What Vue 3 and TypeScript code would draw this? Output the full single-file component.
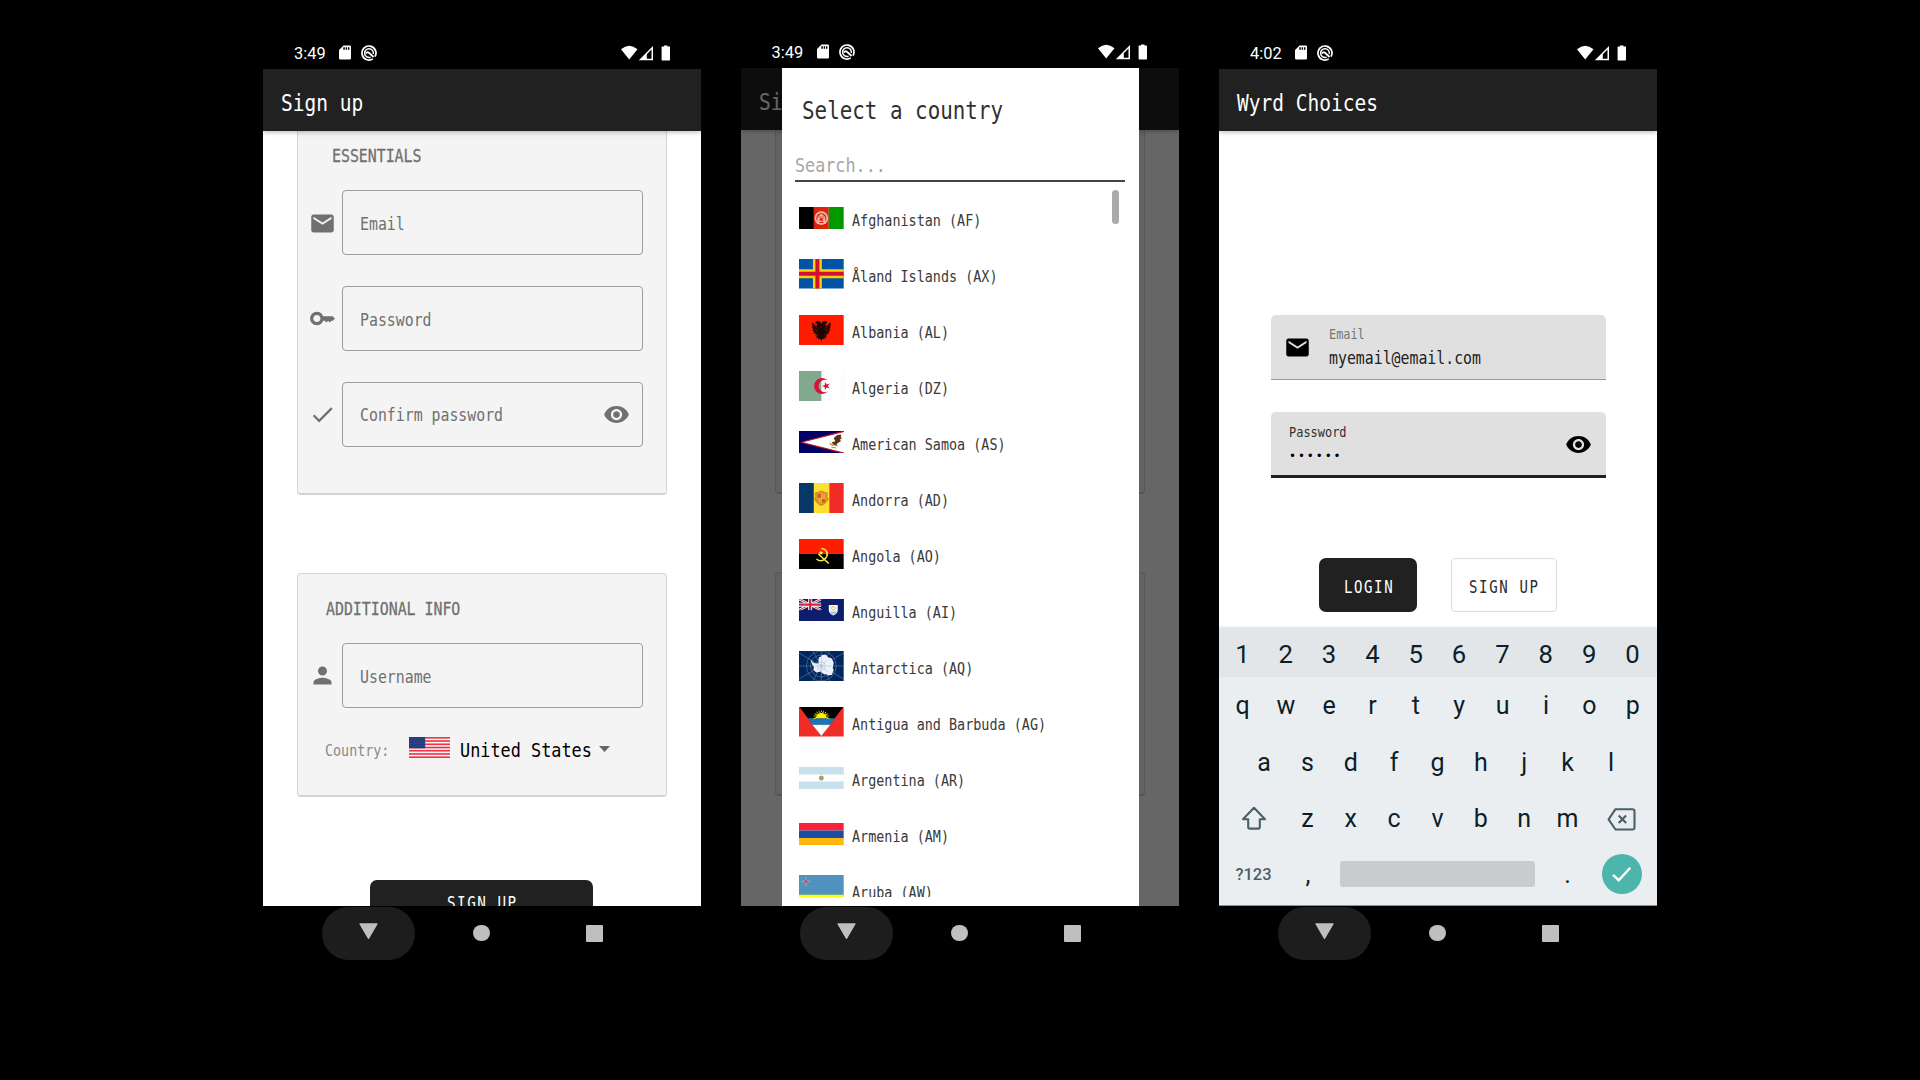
<script setup lang="ts">
import { h } from 'vue'
import type { FunctionalComponent } from 'vue'

interface MonoProps {
  text: string
  cap: number
  adv: number
  sx?: number
  bold?: number
}

// Condensed monospace label: the box is exactly cap-height tall, glyphs sit on its bottom edge.
const Mono: FunctionalComponent<MonoProps> = (p) => {
  const size = p.cap / 0.729
  const sx = p.sx ?? p.adv / (size * 0.602)
  const spacing = p.adv / sx - size * 0.602
  return h(
    'svg',
    { class: 'mono', width: p.text.length * p.adv, height: p.cap },
    h(
      'text',
      {
        transform: `translate(0 ${p.cap}) scale(${sx} 1)`,
        'font-size': size,
        'letter-spacing': spacing,
        fill: 'currentColor',
        stroke: 'currentColor',
        'stroke-width': p.bold ?? 0,
        'xml:space': 'preserve',
      },
      p.text,
    ),
  )
}
Mono.props = ['text', 'cap', 'adv', 'sx', 'bold']

const icons: Record<string, string> = {
  mail: 'M20 4H4c-1.1 0-1.99.9-1.99 2L2 18c0 1.1.9 2 2 2h16c1.1 0 2-.9 2-2V6c0-1.1-.9-2-2-2zm0 4l-8 5-8-5V6l8 5 8-5v2z',
  key: 'M12.65 10C11.83 7.67 9.61 6 7 6c-3.31 0-6 2.69-6 6s2.69 6 6 6c2.61 0 4.83-1.67 5.65-4H14l1.5 1.5L17 14l1.5 1.5L20 14h1.2L23 12l-2-2zM7 15.2c-1.77 0-3.2-1.43-3.2-3.2S5.230 8.8 7 8.800s3.200 1.430 3.200 3.200-1.430 3.200-3.200 3.200z',
  check: 'M9 16.170L4.830 12l-1.420 1.410L9 19 21 7l-1.410-1.410z',
  eye: 'M12 4.5C7 4.500 2.730 7.610 1 12c1.730 4.390 6 7.500 11 7.500s9.270-3.110 11-7.500c-1.730-4.390-6-7.500-11-7.500zM12 17c-2.760 0-5-2.240-5-5s2.240-5 5-5 5 2.240 5 5-2.240 5-5 5zm0-8c-1.660 0-3 1.340-3 3s1.340 3 3 3 3-1.340 3-3-1.340-3-3-3z',
  person: 'M12 12c2.210 0 4-1.790 4-4s-1.790-4-4-4-4 1.790-4 4 1.790 4 4 4zm0 2c-2.670 0-8 1.340-8 4v2h16v-2c0-2.660-5.330-4-8-4z',
}

const fields = [
  { icon: 'mail', label: 'Email' },
  { icon: 'key', label: 'Password' },
  { icon: 'check', label: 'Confirm password' },
]

const phones = [
  { id: 'signup', time: '3:49' },
  { id: 'country', time: '3:49' },
  { id: 'login', time: '4:02' },
]

const stripes = [0, 2, 4, 6, 8, 10, 12].map((y) => `<rect y="${y}" width="41" height="1" fill="#ee3344"/>`).join('')
const stars = [1, 2.5, 4, 5.5]
  .map((y, r) => [1, 3, 5, 7, 9, 11, 13, 15].map((x) => `<circle cx="${x + (r % 2) * 0.8}" cy="${y}" r=".25" fill="#8f9acb"/>`).join(''))
  .join('')
const usFlag = `<rect width="41" height="13" fill="#fdf3f4"/>${stripes}<rect width="16" height="7" fill="#233a7c"/>${stars}`

const spokes = Array.from({ length: 12 }, (_, i) => {
  const a = (i * Math.PI) / 6
  return `M45 30L${45 + Math.cos(a) * 55} ${30 + Math.sin(a) * 55}`
}).join('')
const rays = Array.from({ length: 11 }, (_, i) => {
  const a = (i * Math.PI) / 10
  const p = (r: number, t: number) => `${45 + Math.cos(t) * r} ${23 - Math.sin(t) * r}`
  return `M${p(11, a - 0.14)}L${p(18, a)}L${p(11, a + 0.14)}Z`
}).join('')

interface Country {
  name: string
  fh: number
  art: string
}

const countries: Country[] = [
  {
    name: 'Afghanistan (AF)',
    fh: 22,
    art: '<path fill="#000" d="M0 0h30v44H0z"/><path fill="#d9230f" d="M30 0h30v44H30z"/><path fill="#090" d="M60 0h30v44H60z"/><circle cx="45" cy="22" r="12" fill="none" stroke="#f3b8ae" stroke-width="3.500"/><path d="M37 30v-10l8-7 8 7v10z" fill="#f0aba0"/><path d="M42.500 27v-4h5v4zM39 20h12" fill="#d9230f" stroke="#d9230f" stroke-width="1.300"/><path d="M36 33h18" stroke="#f3b8ae" stroke-width="2"/>',
  },
  {
    name: 'Åland Islands (AX)',
    fh: 29.5,
    art: '<path fill="#0053a5" d="M0 0h90v60H0z"/><path fill="#ffce00" d="M28 0h18v60H28zM0 21h90v18H0z"/><path fill="#d21034" d="M33 0h8v60h-8zM0 26h90v8H0z"/>',
  },
  {
    name: 'Albania (AL)',
    fh: 30.5,
    art: '<path fill="#ff1d00" d="M0 0h90v60H0z"/><path fill="#1c0603" d="M45 17l-3-4-6-1-4 4 5 1-1 4-4-1-5-6-1 7 2 2-2 2 3 3-2 3 4 2-2 4 5-1-1 5 4-2-3 6 5-1-1 4 4-2 3 5 3-5 4 2-1-4 5 1-3-6 4 2-1-5 5 1-2-4 4-2-2-3 3-3-2-2 2-2-1-7-5 6-4 1-1-4 5-1-4-4-6 1z"/><path stroke="#ff1d00" stroke-width=".8" d="M32 22l7 5M31 28l7 3M58 22l-7 5M59 28l-7 3M36 35l3 4M54 35l-3 4"/>',
  },
  {
    name: 'Algeria (DZ)',
    fh: 30,
    art: '<path fill="#fefefe" d="M0 0h90v60H0z"/><path fill="#82a98f" d="M0 0h45v60H0z"/><path fill="#f3f3f3" d="M89 0h1v60h-1z"/><path fill="#d8123a" d="M58 19a16 16 0 1 0 0 22 12.500 12.500 0 1 1 0-22zM46 30l6-2v-6l4 5 6-2-4 5 4 5-6-2-4 5v-6z"/>',
  },
  {
    name: 'American Samoa (AS)',
    fh: 22.500,
    art: '<path fill="#006" d="M0 0h90v45H0z"/><path fill="#fff" stroke="#bd1021" stroke-width="2.500" d="M93 0L4 22.500 93 45z"/><path fill="#583016" d="M70 14l7-6 8-1-1 6 4 1-5 2 1 5-6 3-4 6-5-3-3-5 7-1z"/><path fill="none" stroke="#b79032" stroke-width="2" d="M62 26l17 4M65 32l10 2M62 23l6 7"/>',
  },
  {
    name: 'Andorra (AD)',
    fh: 30,
    art: '<path fill="#073768" d="M0 0h30v60H0z"/><path fill="#fedf31" d="M30 0h31v60H30z"/><path fill="#ef2d26" d="M61 0h29v60H61z"/><path fill="#e0922a" stroke="#c77b25" stroke-width="1.500" d="M33 20l7-2 5-2 5 2 7 2-1 8 3 4-4 6-5 5-5 2-5-2-5-5-4-6 3-4z"/><path fill="#d3562b" d="M38 22h6v8h-6zM46 32h6v7h-6z"/><path stroke="#f3c447" stroke-width="1.200" d="M45 21v20M37 31h16M48 22v8M51 22v8M39 34h5M39 37h5"/>',
  },
  {
    name: 'Angola (AO)',
    fh: 30,
    art: '<path fill="#ff1d00" d="M0 0h90v30H0z"/><path d="M0 30h90v30H0z"/><path fill="none" stroke="#ffec3d" stroke-width="3.200" d="M45 19c12 1 15 13 8 20-6 6-13 5-18 1M39 30l21 19"/><path fill="#ffec3d" d="M44 23l1.500 3 3.500.5-2.500 2 .8 3.500-3.300-2-3 2 .8-3.500-2.300-2 3-.5z"/>',
  },
  {
    name: 'Anguilla (AI)',
    fh: 22.500,
    art: '<path fill="#0b1d6b" d="M0 0h90v45H0z"/><path stroke="#fff" stroke-width="5" d="M0 0l45 22.500M45 0L0 22.500"/><path stroke="#d8344d" stroke-width="2" d="M0 0l45 22.500M45 0L0 22.500"/><path stroke="#fff" stroke-width="8" d="M22.500 0v22.500M0 11.250h45"/><path stroke="#cf2440" stroke-width="4.500" d="M22.500 0v22.500M0 11.250h45"/><path fill="#0b1d6b" d="M0 22.500h90V45H0zM45 0h45v25H45z"/><path fill="#f6f8f3" d="M60 12h18v11c0 5-5 8-9 10-4-2-9-5-9-10z"/><path fill="#8ed2e4" d="M62 25h14c-1 3-4 5-7 6.500-3-1.500-6-3.500-7-6.500z"/><circle cx="69" cy="18.500" r="3.500" fill="none" stroke="#ecb45c" stroke-width="2"/>',
  },
  {
    name: 'Antarctica (AQ)',
    fh: 30,
    art: `<path fill="#00265d" d="M0 0h90v60H0z"/><g fill="none" stroke="#6f87a8" stroke-width="1.100"><path d="${spokes}"/><circle cx="45" cy="30" r="30"/><circle cx="45" cy="30" r="22"/></g><path fill="#eef2f8" d="M23 17l7 7 7 1 3-2-1-6 2-5 4-1 1-3 8-1 5 6 6 1 5 9-2 11 2 4-4 10-8 1-3-3-4 1-4-3-3-3-9 2-6-5 1-7-3-3z"/><g fill="none" stroke="#9fb0ca" stroke-width=".9"><circle cx="45" cy="30" r="8"/><circle cx="45" cy="30" r="3"/><path d="M45 12v36M30 30h36M34 20l24 22M57 18L34 40"/></g>`,
  },
  {
    name: 'Antigua and Barbuda (AG)',
    fh: 29.500,
    art: `<path fill="#ef2d26" d="M0 0h90v60H0z"/><path d="M1 0h88L45 59z"/><path fill="#1b75bb" d="M18 23h54L63 36H27z"/><path fill="#fff" d="M27 36h36L45 59z"/><path fill="#fff200" d="M32 23a13 13 0 0 1 26 0z${rays}"/>`,
  },
  {
    name: 'Argentina (AR)',
    fh: 22,
    art: '<path fill="#c8dfec" d="M0 0h90v44H0z"/><path fill="#fff" d="M0 15h90v14H0z"/><circle cx="45" cy="22" r="5" fill="#ac9c6c"/>',
  },
  {
    name: 'Armenia (AM)',
    fh: 22,
    art: '<path fill="#fb2038" d="M0 0h90v15H0z"/><path fill="#1c4ea3" d="M0 15h90v15H0z"/><path fill="#ffb60d" d="M0 30h90v14H0z"/>',
  },
  {
    name: 'Aruba (AW)',
    fh: 30,
    art: '<path fill="#5292be" d="M0 0h90v60H0z"/><path fill="#ff0" d="M0 39.500h90v5H0zM0 49h90v4H0z"/><path fill="#ff2c27" stroke="#e9c5cf" stroke-width=".7" d="M14 4l1.700 7.300 7.300 1.700-7.300 1.700L14 22l-1.700-7.300L5 13l7.300-1.700z"/>',
  },
]

const viewHeight = (c: Country) => (c.fh > 25 ? 60 : c.name.includes('(AS)') || c.name.includes('(AI)') ? 45 : 44)

const digits = [...'1234567890']
const rowQ = [...'qwertyuiop']
const rowA = [...'asdfghjkl']
const rowZ = [...'zxcvbnm']
</script>

<template>
  <div class="stage">
    <section v-for="p in phones" :key="p.id" class="phone" :class="p.id">
      <div class="status">
        <span class="time">{{ p.time }}</span>
        <svg class="sd" width="12" height="15" viewBox="0 0 12 15">
          <path fill="#fff" fill-rule="evenodd" d="M4.500 .5H10.700q1.300 0 1.300 1.300V13.200q0 1.300-1.300 1.300H1.300Q0 14.500 0 13.200V5zM4.300 2.200v2.600h1.500V2.200zM6.700 2.200v2.600h1.400V2.200zM9 2.200v2.600h1.400V2.200z" />
        </svg>
        <svg class="swirl" width="16" height="16" viewBox="0 0 16 16" fill="none" stroke="#fff">
          <path stroke-width="1.700" d="M11.800 13.900A7 7 0 1 1 14 11.600" />
          <path stroke-width="1.500" d="M9.600 12.200A4.400 4.400 0 1 1 12.300 9" />
          <path stroke-width="1.800" d="M5 8.600q1-2.200 3-.8L12.600 12" />
        </svg>
        <span class="grow"></span>
        <svg class="signals" width="50" height="16" viewBox="0 0 50 16" fill="#fff">
          <path d="M0 4.200Q8.200-2.800 16.500 4.200L8.200 14.500z" />
          <path fill-rule="evenodd" d="M17.800 15.300L32 1v14.300zM25.800 9.300v4.500h4.700V4.500z" />
          <path d="M41 1.600h2V.5h3.500v1.100h2q.5 0 .5.500v12.700q0 .6-.6.600h-7.200q-.6 0-.6-.6V2.100q0-.5.400-.5z" />
        </svg>
      </div>

      <div class="screen">
        <header class="appbar">
          <Mono :text="p.id === 'login' ? 'Wyrd Choices' : 'Sign up'" :cap="17" :adv="11.750" />
        </header>

        <main v-if="p.id === 'signup'" class="form">
          <div class="card essentials">
            <Mono class="heading" text="ESSENTIALS" :cap="13.2" :adv="8.95" :bold="0.3" />
            <div v-for="f in fields" :key="f.label" class="field-row">
              <svg class="icon" viewBox="0 0 24 24"><path :d="icons[f.icon]" /></svg>
              <div class="field">
                <Mono :text="f.label" :cap="12.8" :adv="8.95" />
                <svg v-if="f.icon === 'check'" class="icon" viewBox="0 0 24 24"><path :d="icons.eye" /></svg>
              </div>
            </div>
          </div>
          <div class="card additional">
            <Mono class="heading" text="ADDITIONAL INFO" :cap="13.2" :adv="8.96" :bold="0.3" />
            <div class="field-row">
              <svg class="icon" viewBox="0 0 24 24"><path :d="icons.person" /></svg>
              <div class="field"><Mono text="Username" :cap="12.8" :adv="8.95" /></div>
            </div>
            <div class="country-row">
              <Mono class="caption" text="Country:" :cap="11.3" :adv="8.05" />
              <svg class="us" width="41.500" height="21" viewBox="0 0 41 13" preserveAspectRatio="none" v-html="usFlag"></svg>
              <Mono class="chosen" text="United States" :cap="14" :adv="10.15" />
              <svg class="caret" width="11" height="6" viewBox="0 0 11 6"><path fill="#666" d="M0 0h11L5.500 6z" /></svg>
            </div>
          </div>
          <div class="submit"><Mono text="SIGN UP" :cap="13" :adv="10.1" :sx="0.8" /></div>
        </main>

        <main v-else-if="p.id === 'country'" class="form">
          <div class="card essentials"></div>
          <div class="card additional"></div>
        </main>

        <main v-else class="login-form">
          <div class="filled">
            <svg class="icon" viewBox="0 0 24 24"><path :d="icons.mail" /></svg>
            <div class="stack">
              <Mono class="small" text="Email" :cap="10.2" :adv="7.150" />
              <Mono class="value" text="myemail@email.com" :cap="12.8" :adv="8.950" />
            </div>
          </div>
          <div class="filled active">
            <div class="stack">
              <Mono class="small" text="Password" :cap="10.2" :adv="7.200" />
              <Mono class="dots" text="••••••" :cap="8.500" :adv="8.930" :sx="1" />
            </div>
            <svg class="icon" viewBox="0 0 24 24"><path :d="icons.eye" /></svg>
          </div>
          <div class="buttons">
            <div class="btn dark"><Mono text="LOGIN" :cap="12.8" :adv="10.050" :sx="0.8" /></div>
            <div class="btn light"><Mono text="SIGN UP" :cap="12.8" :adv="10.100" :sx="0.8" /></div>
          </div>
        </main>

        <div v-if="p.id === 'login'" class="keyboard">
          <div class="keys digits"><span v-for="k in digits" :key="k">{{ k }}</span></div>
          <div class="keys top"><span v-for="k in rowQ" :key="k">{{ k }}</span></div>
          <div class="keys mid"><span v-for="k in rowA" :key="k">{{ k }}</span></div>
          <div class="keys low">
            <svg class="shift" width="26" height="25" viewBox="0 0 26 25"><path d="M13 1.800L2 13.200h5.200v7.800q0 1.600 1.600 1.600h8.400q1.600 0 1.600-1.600v-7.800H24z" /></svg>
            <span v-for="k in rowZ" :key="k">{{ k }}</span>
            <svg class="back" width="29" height="23" viewBox="0 0 29 23"><path d="M8.500 1.200H25.500q2 0 2 2V19.500q0 2-2 2H8.500L1.600 11.400zM11.700 7.600l7.400 7.400M19.100 7.600L11.700 15" /></svg>
          </div>
          <div class="keys last">
            <span class="sym">?123</span>
            <span class="comma">,</span>
            <div class="space"></div>
            <span class="dot">.</span>
            <div class="go"><svg width="22" height="17" viewBox="0 0 22 17"><path d="M2 8.800l5.700 5.400L19.300 1.800" /></svg></div>
          </div>
        </div>

        <template v-if="p.id === 'country'">
          <div class="scrim"></div>
          <div class="dialog">
            <Mono class="dlg-title" text="Select a country" :cap="17.800" :adv="12.570" />
            <div class="search"><Mono text="Search..." :cap="14.700" :adv="10.100" /></div>
            <div class="list">
              <div class="rows">
                <div v-for="c in countries" :key="c.name" class="row">
                  <svg width="44.700" :height="c.fh" :viewBox="`0 0 90 ${viewHeight(c)}`" preserveAspectRatio="none" v-html="c.art"></svg>
                  <Mono :text="c.name" :cap="11.600" :adv="8.090" />
                </div>
              </div>
              <div class="thumb"></div>
            </div>
          </div>
        </template>
      </div>

      <nav class="nav">
        <div class="pill"><svg width="19" height="17" viewBox="0 0 19 17"><path fill="#bfbfbf" d="M1 .3h17q1 0 .5 1L10.200 15.500q-.7 1.200-1.400 0L.5 1.300Q0 .3 1 .3z" /></svg></div>
        <div class="home"></div>
        <div class="recent"></div>
      </nav>
    </section>
  </div>
</template>

<style>
body {
  background: #000;
}
</style>

<style scoped>
* {
  box-sizing: border-box;
}
svg {
  display: block;
  flex: none;
}
.stage {
  width: 1920px;
  height: 1080px;
  overflow: hidden;
  background: #000;
  display: flex;
  gap: 40px;
  padding-left: 263px;
  font-family: Roboto, sans-serif;
}
.phone {
  width: 438px;
  flex: none;
}
.mono {
  overflow: visible;
  font-family: 'DejaVu Sans Mono', monospace;
}
.status {
  height: 69px;
  padding: 45px 30px 0 31px;
  display: flex;
  align-items: flex-start;
  color: #fff;
}
.country .status {
  height: 68px;
  padding: 44px 31px 0 30.500px;
}
.time {
  width: 45px;
  font-size: 16.4px;
  line-height: 17px;
}
.swirl {
  margin-left: 10px;
}
.grow {
  flex: 1;
}
.screen {
  position: relative;
  height: 837px;
  overflow: hidden;
  background: #fff;
}
.country .screen {
  height: 838px;
}
.appbar {
  position: relative;
  z-index: 1;
  height: 62px;
  padding: 24.7px 0 0 17.500px;
  background: #212121;
  color: #fff;
  box-shadow: 0 1px 5px rgba(0, 0, 0, 0.3);
}
.form {
  padding-left: 34px;
}
.card {
  width: 370px;
  background: #f4f4f4;
  border: 1px solid #d6d6d6;
  border-bottom: 2px solid #d3d3d3;
  border-radius: 4px;
  color: #707070;
}
.essentials {
  height: 364px;
  border-top: 0;
  border-radius: 0 0 4px 4px;
  padding-top: 18px;
}
.essentials .heading {
  margin: 0 0 28px 33.500px;
}
.additional {
  margin-top: 78px;
  height: 223.500px;
  padding-top: 28px;
}
.additional .heading {
  margin: 0 0 27.800px 27.500px;
}
.field-row {
  display: flex;
  align-items: center;
  height: 65px;
  margin-bottom: 30.800px;
  padding-left: 11px;
}
.icon {
  width: 27px;
  height: 27px;
  fill: currentColor;
}
.field-row > .icon {
  margin-top: 1px;
}
.field {
  display: flex;
  align-items: center;
  justify-content: space-between;
  width: 301px;
  height: 65px;
  margin-left: 6px;
  padding: 0 12px 0 17px;
  border: 1px solid #9c9c9c;
  border-radius: 4px;
}
.field .mono {
  margin-top: 1px;
}
.country-row {
  display: flex;
  align-items: flex-start;
  margin-top: -1.500px;
  padding-left: 27px;
}
.caption {
  margin-top: 7.400px;
  color: #8a8a8a;
}
.us {
  margin-left: 19.200px;
}
.chosen {
  margin: 6px 7.200px 0 9.500px;
  color: #000;
}
.caret {
  margin-top: 8.300px;
}
.submit {
  width: 223px;
  height: 54px;
  margin: 83.500px 0 0 73.300px;
  padding: 15.500px 0 0 76.800px;
  border-radius: 7px;
  background: #212121;
  color: #fff;
}
.login-form {
  height: 497px;
  padding: 184px 0 0 52px;
}
.filled {
  display: flex;
  align-items: center;
  width: 335px;
  height: 65px;
  background: #e0e0e0;
  border-bottom: 1.500px solid #999;
  border-radius: 5px 5px 0 0;
  padding: 0 14px 0 13px;
  color: #000;
}
.filled .stack {
  margin-left: 17.800px;
  flex: 1;
  margin-top: -1px;
}
.filled.active {
  margin-top: 32px;
  height: 66px;
  border-bottom: 3px solid #212121;
}
.active .stack {
  margin-left: 4.700px;
}
.active .icon {
  margin-top: 2px;
}
.small {
  color: #757575;
}
.active .small {
  color: #2e2e2e;
}
.value {
  margin-top: 11.300px;
  color: #212121;
}
.dots {
  margin-top: 13.500px;
  margin-left: 0.500px;
}
.buttons {
  display: flex;
  padding-left: 48px;
  margin-top: 80px;
  gap: 33.500px;
}
.btn {
  height: 54px;
  padding-top: 21.500px;
}
.dark {
  width: 98px;
  padding-left: 24.500px;
  border-radius: 7px;
  background: #212121;
  color: #fff;
}
.light {
  width: 106.500px;
  padding-top: 20.500px;
  padding-left: 17.500px;
  border: 1px solid #dcdcdc;
  border-radius: 4px;
  color: #2c2c2c;
}
.keyboard {
  height: 278px;
  background: #ebeef1;
  border-bottom: 1px solid #8b9092;
  box-shadow: 0 -1px 2px rgba(0, 0, 0, 0.12);
  color: #0b1f29;
}
.keys {
  display: flex;
  align-items: center;
  font-size: 25px;
}
.keys > span {
  width: 43.350px;
  text-align: center;
}
.digits {
  height: 49px;
  padding: 2px 0 0 1.700px;
  font-size: 25.700px;
  background: #e3e6e9;
}
.top {
  height: 57.500px;
  padding-left: 1.900px;
}
.mid {
  height: 55px;
  padding-left: 23.500px;
}
.low {
  height: 56px;
  padding: 1.500px 0 0 21.500px;
}
.shift,
.back {
  fill: none;
  stroke: #4b5f67;
  stroke-width: 2.100;
  stroke-linejoin: round;
}
.shift {
  margin: 1px 19.300px 0 0;
}
.back {
  margin: 3px 0 0 18px;
}
.last {
  height: 57px;
  padding-left: 13px;
}
.keys > .sym {
  width: 43px;
  font-size: 16.500px;
  font-weight: 500;
  color: #4b5f67;
}
.keys > .comma {
  width: 43px;
  margin-left: 11.500px;
}
.space {
  width: 195px;
  height: 26px;
  margin-left: 10.500px;
  border-radius: 3px;
  background: #c8cccf;
}
.keys > .dot {
  width: 43px;
  margin-left: 11px;
}
.go {
  width: 40px;
  height: 40px;
  margin-left: 13px;
  border-radius: 50%;
  background: #4db6ac;
  display: flex;
  align-items: center;
  justify-content: center;
}
.go path {
  fill: none;
  stroke: #fff;
  stroke-width: 2.400;
}
.scrim {
  position: absolute;
  inset: 0;
  z-index: 2;
  background: rgba(0, 0, 0, 0.6);
}
.dialog {
  position: absolute;
  z-index: 3;
  left: 40.500px;
  top: 0;
  width: 357.300px;
  height: 837.700px;
  padding-top: 32.500px;
  background: #fff;
  color: #3a3a3a;
}
.dlg-title {
  margin-left: 20px;
  color: #303030;
}
.search {
  width: 330px;
  height: 25px;
  margin: 38.900px 0 0 13.500px;
  border-bottom: 2px solid #444;
  color: #a6a6a6;
}
.list {
  display: flex;
  height: 714.500px;
  overflow: hidden;
}
.rows {
  width: 330.500px;
  padding: 7.800px 0 0 17.700px;
}
.row {
  display: flex;
  align-items: center;
  height: 56px;
}
.row .mono {
  margin: 3.200px 0 0 8.500px;
}
.thumb {
  width: 7px;
  height: 34px;
  margin-top: 8px;
  border-radius: 4px;
  background: #aaa;
}
.nav {
  display: flex;
  align-items: center;
  height: 54px;
}
.pill {
  width: 93px;
  height: 53px;
  margin-left: 59.300px;
  border-radius: 27px;
  background: #1d1d1d;
  display: flex;
  justify-content: center;
  padding-top: 16.500px;
}
.home {
  width: 16.500px;
  height: 16.500px;
  margin-left: 58.200px;
  border-radius: 50%;
  background: #bfbfbf;
}
.recent {
  width: 17px;
  height: 17px;
  margin-left: 95.800px;
  border-radius: 1px;
  background: #bfbfbf;
}
</style>
